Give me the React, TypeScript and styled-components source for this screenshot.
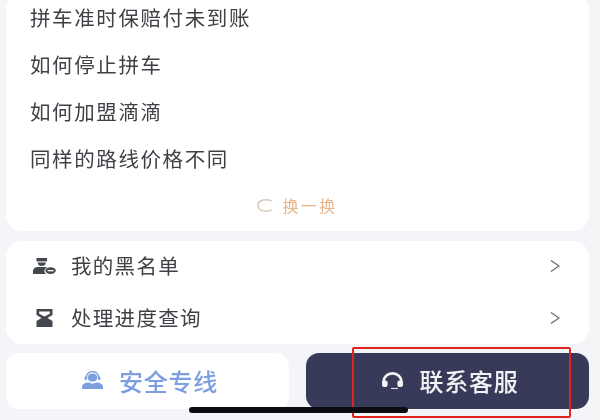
import * as React from 'react';
import styled, { createGlobalStyle } from 'styled-components';

const GlobalStyle = createGlobalStyle`
  html, body {
    margin: 0;
    padding: 0;
    background: #f3f5f8;
  }
`;

const Page = styled.main`
  position: relative;
  width: 600px;
  height: 420px;
  overflow: hidden;
  background: #f3f5f8;
  display: flex;
  flex-direction: column;
  padding: 0 11px 0 6px;
  box-sizing: border-box;
  font-family: "Noto Sans CJK SC", "Liberation Sans", sans-serif;
  filter: blur(0.6px);
`;

const Card = styled.section`
  background: #ffffff;
  border-radius: 16px;
`;

const QuestionCard = styled(Card)`
  margin-top: -6px;
  height: 237px;
  padding: 0 24px;
  box-sizing: border-box;
`;

const Question = styled.div`
  height: 47px;
  line-height: 46px;
  font-size: 20.5px;
  letter-spacing: 1.6px;
  color: #3f4146;
  border-bottom: 1px solid #fbfbfc;
  box-sizing: border-box;
`;

const Refresh = styled.div`
  height: 49px;
  display: flex;
  align-items: center;
  justify-content: center;
  gap: 9px;
  font-size: 16px;
  letter-spacing: 2.4px;
  color: #e6b58a;
  padding-bottom: 3px;
  box-sizing: border-box;
`;

const MenuCard = styled(Card)`
  margin-top: 10px;
  height: 103px;
  display: flex;
  flex-direction: column;
`;

const MenuRow = styled.div`
  flex: 1;
  display: flex;
  align-items: center;
  padding: 0 29px 2px 26px;
  & + & {
    border-top: 1px solid #fbfbfc;
  }
`;

const MenuIcon = styled.span`
  width: 24px;
  height: 24px;
  margin-right: 15px;
  display: flex;
  align-items: center;
  justify-content: center;
`;

const MenuLabel = styled.span`
  flex: 1;
  padding-bottom: 2px;
  font-size: 20.5px;
  letter-spacing: 1.3px;
  color: #3f4146;
`;

const Actions = styled.div`
  margin-top: 9px;
  display: grid;
  grid-template-columns: 283px 283px;
  column-gap: 17px;
`;

const ActionButton = styled.div<{ $dark?: boolean }>`
  height: 56px;
  border-radius: 13px;
  display: flex;
  align-items: center;
  justify-content: center;
  gap: ${(p) => (p.$dark ? '15px' : '16px')};
  padding: 0 0 2px 5px;
  box-sizing: border-box;
  font-size: 24px;
  font-weight: 500;
  letter-spacing: 0.8px;
  background: ${(p) => (p.$dark ? '#383a5a' : '#ffffff')};
  color: ${(p) => (p.$dark ? '#f2f2f5' : '#7d9fe0')};
`;

const Highlight = styled.div`
  position: absolute;
  left: 352px;
  top: 347px;
  width: 219px;
  height: 71px;
  border: 2px solid #e3231f;
  border-radius: 2px;
  box-sizing: border-box;
`;

const HomeBar = styled.div`
  position: absolute;
  left: 189px;
  top: 407px;
  width: 219px;
  height: 6px;
  border-radius: 3px;
  background: #0d0d10;
`;

const Chevron = () => (
  <svg width="10" height="14" viewBox="0 0 10 14" fill="none" stroke="#63656a" strokeWidth="1.2">
    <path d="M1 1.5 L9 7 L1 12.5" />
  </svg>
);

const BlacklistIcon = () => (
  <svg width="23" height="16" viewBox="0 0 23 16" fill="#45474f">
    <path d="M3.5 0 H14 V3.4 H3.5 Z" />
    <path d="M4.6 4.4 H12.9 A4.2 4.2 0 0 1 4.6 4.4 Z" />
    <path d="M0 16 V13.2 C0 10.6 2.4 9 5.2 9 H12.6 C13.2 9 13.8 9.1 14.2 9.3 C12.4 10.2 11.4 11.6 11.4 13 C11.4 14.2 12 15.2 13 16 Z" />
    <ellipse cx="17.6" cy="12.6" rx="5.2" ry="3.4" />
    <rect x="14.6" y="12" width="6" height="1.3" fill="#ffffff" />
  </svg>
);

const ProgressIcon = () => (
  <svg width="17" height="18" viewBox="0 0 17 18" fill="#45474f">
    <path
      d="M0.5 0 H16.5 V6 L11.5 9 L16.5 12 V18 H0.5 V12 L5.5 9 L0.5 6 Z M3.2 2.6 V4.8 L8.5 7.6 L13.8 4.8 V2.6 Z"
      fillRule="evenodd"
    />
  </svg>
);

const AgentIcon = () => (
  <svg width="21" height="18" viewBox="0 0 21 18" fill="#7d9fe0">
    <path d="M4 7 A6.5 6.5 0 0 1 17 7" fill="none" stroke="#7d9fe0" strokeWidth="1.4" />
    <ellipse cx="10.5" cy="6.6" rx="5" ry="4" />
    <rect x="2.6" y="5.6" width="2.2" height="3.6" rx="1" />
    <rect x="16.2" y="5.6" width="2.2" height="3.6" rx="1" />
    <path d="M0 18 V16 C0 13.2 3.2 11.6 6.6 11.6 L10.5 12.8 L14.4 11.6 C17.8 11.6 21 13.2 21 16 V18 Z" />
  </svg>
);

const HeadsetIcon = () => (
  <svg width="23" height="17" viewBox="0 0 23 17" fill="none">
    <path d="M2.6 10 V9.6 A8.9 8.2 0 0 1 20.4 9.6 V10" stroke="#f4f4f7" strokeWidth="2.6" />
    <rect x="1" y="8.5" width="5.6" height="6.5" rx="2" fill="#f4f4f7" />
    <rect x="16.4" y="8.5" width="5.6" height="6.5" rx="2" fill="#f4f4f7" />
    <path d="M10 16.4 H17" stroke="#f4f4f7" strokeWidth="1" />
  </svg>
);

const RefreshIcon = () => (
  <svg width="16" height="13" viewBox="0 0 16 13" fill="none" stroke="#d9c8b6" strokeWidth="1.4">
    <path d="M15 2.2 C13.6 1.2 11.6 0.8 9 0.8 C4 0.8 1 3 1 6.5 C1 10 4 12.2 9 12.2 C11.6 12.2 13.6 11.8 15 10.8" />
  </svg>
);

const questions = ['拼车准时保赔付未到账', '如何停止拼车', '如何加盟滴滴', '同样的路线价格不同'];

export default function App() {
  return (
    <>
      <GlobalStyle />
      <Page>
        <QuestionCard>
          {questions.map((q) => (
            <Question key={q}>{q}</Question>
          ))}
          <Refresh>
            <RefreshIcon />
            <span>换一换</span>
          </Refresh>
        </QuestionCard>

        <MenuCard>
          <MenuRow>
            <MenuIcon>
              <BlacklistIcon />
            </MenuIcon>
            <MenuLabel>我的黑名单</MenuLabel>
            <Chevron />
          </MenuRow>
          <MenuRow>
            <MenuIcon>
              <ProgressIcon />
            </MenuIcon>
            <MenuLabel>处理进度查询</MenuLabel>
            <Chevron />
          </MenuRow>
        </MenuCard>

        <Actions>
          <ActionButton>
            <AgentIcon />
            <span>安全专线</span>
          </ActionButton>
          <ActionButton $dark>
            <HeadsetIcon />
            <span>联系客服</span>
          </ActionButton>
        </Actions>

        <Highlight />
        <HomeBar />
      </Page>
    </>
  );
}
